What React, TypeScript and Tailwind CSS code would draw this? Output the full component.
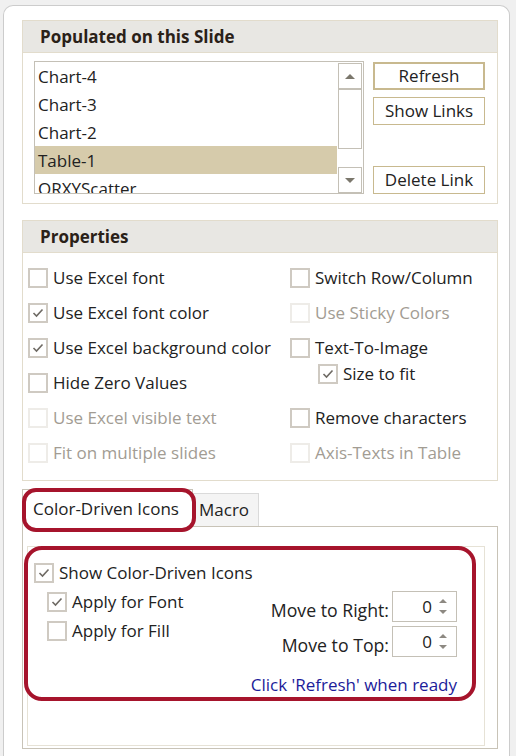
import React from 'react';

const FONT = { fontFamily: "'Open Sans', 'Noto Sans', sans-serif" };

function Box({ checked, disabled }: { checked?: boolean; disabled?: boolean }) {
    return (
        <span
            className={`flex h-5 w-5 shrink-0 items-center justify-center border-2 bg-white ${
                disabled ? 'border-[#eeece8]' : 'border-[#cfcac2]'
            }`}
        >
            {checked && (
                <svg width="12" height="10" viewBox="0 0 12 10">
                    <path d="M1.5 5 L4.5 8 L10.5 1.5" fill="none" stroke="#6e6a64" strokeWidth="1.6" />
                </svg>
            )}
        </span>
    );
}

function Check({
    label,
    checked,
    disabled,
    className = '',
}: {
    label: string;
    checked?: boolean;
    disabled?: boolean;
    className?: string;
}) {
    return (
        <div className={`flex items-center gap-[5px] ${className}`}>
            <Box checked={checked} disabled={disabled} />
            <span className={`whitespace-nowrap ${disabled ? 'text-[#a29c93]' : 'text-[#222]'}`}>{label}</span>
        </div>
    );
}

function Arrow({ up, size = 'lg' }: { up?: boolean; size?: 'lg' | 'sm' }) {
    const w = size === 'lg' ? 10 : 8;
    const h = size === 'lg' ? 5 : 4;
    return (
        <svg width={w} height={h} viewBox={`0 0 ${w} ${h}`}>
            <polygon
                points={up ? `0,${h} ${w},${h} ${w / 2},0` : `0,0 ${w},0 ${w / 2},${h}`}
                fill={size === 'lg' ? '#7b776c' : '#8d8982'}
            />
        </svg>
    );
}

function Spin({ label }: { label: string }) {
    return (
        <div className="flex items-center gap-[3px]">
            <span className="translate-y-[4px] whitespace-nowrap text-[17.7px] text-[#222]">{label}</span>
            <div className="flex h-[31px] w-[65px] items-center border border-[#c4c0b6] bg-white">
                <span className="flex-1 pr-[4px] text-right text-[#222]">0</span>
                <div className="flex w-[20px] flex-col items-center gap-[7px] pr-[6px]">
                    <Arrow up size="sm" />
                    <Arrow size="sm" />
                </div>
            </div>
        </div>
    );
}

const items = ['Chart-4', 'Chart-3', 'Chart-2', 'Table-1', 'QRXYScatter'];

export default function App() {
    return (
        <div className="min-h-screen bg-[#f0f0f0] pl-[3px] pr-[6px] pt-[5px] text-[17px]" style={FONT}>
            <div className="rounded-t-[10px] border border-b-0 border-[#cccccc] bg-white pb-4 pl-[18px] pr-[11px] pt-[14px]">
                {/* Populated on this Slide */}
                <div className="border border-[#e2dccc]">
                    <div className="flex h-[32px] items-center border-b border-[#e2dccc] bg-[#e8e7e3] pl-[17px] text-[17px] font-bold text-[#2a2118]">
                        Populated on this Slide
                    </div>
                    <div className="flex gap-[9px] pb-[9px] pl-[11px] pt-[8px]">
                        <div className="flex h-[133px] w-[330px] border border-[#c4c0b6]">
                            <div className="flex-1 overflow-hidden">
                                {items.map((it) => (
                                    <div
                                        key={it}
                                        className={`flex h-[28px] items-center pl-[3px] pt-px text-[#222] ${
                                            it === 'Table-1' ? 'bg-[#d6cbab]' : ''
                                        }`}
                                    >
                                        {it}
                                    </div>
                                ))}
                            </div>
                            <div className="flex w-[26px] flex-col px-px pt-px">
                                <div className="flex h-[26px] items-center justify-center border border-[#c4c0b6]">
                                    <Arrow up />
                                </div>
                                <div className="h-[60px] border border-[#c4c0b6]" />
                                <div className="flex-1" />
                                <div className="flex h-[26px] items-center justify-center border border-[#c4c0b6]">
                                    <Arrow />
                                </div>
                            </div>
                        </div>
                        <div className="flex w-[112px] flex-col pt-px text-[#222]">
                            <button className="flex h-[28px] items-center justify-center border-2 border-[#c8b98f] bg-white">
                                Refresh
                            </button>
                            <button className="mt-[7px] flex h-[28px] items-center justify-center border border-[#c8b98f] bg-white">
                                Show Links
                            </button>
                            <button className="mt-[41px] flex h-[28px] items-center justify-center border border-[#c8b98f] bg-white">
                                Delete Link
                            </button>
                        </div>
                    </div>
                </div>

                {/* Properties */}
                <div className="mt-[16px] border border-[#e2dccc]">
                    <div className="flex h-[32px] items-center border-b border-[#e2dccc] bg-[#e8e7e3] pl-[17px] text-[17px] font-bold text-[#2a2118]">
                        Properties
                    </div>
                    <div className="grid grid-cols-[262px_1fr] pb-[10px] pl-[5px] pt-[7px]">
                        <div className="flex flex-col">
                            <Check className="h-[35px]" label="Use Excel font" />
                            <Check className="h-[35px]" label="Use Excel font color" checked />
                            <Check className="h-[35px]" label="Use Excel background color" checked />
                            <Check className="h-[35px]" label="Hide Zero Values" />
                            <Check className="h-[35px]" label="Use Excel visible text" disabled />
                            <Check className="h-[35px]" label="Fit on multiple slides" disabled />
                        </div>
                        <div className="flex flex-col">
                            <Check className="h-[35px]" label="Switch Row/Column" />
                            <Check className="h-[35px]" label="Use Sticky Colors" disabled />
                            <Check className="h-[35px]" label="Text-To-Image" />
                            <Check className="-mt-[4px] h-[26px] pl-[28px]" label="Size to fit" checked />
                            <Check className="mt-[13px] h-[35px]" label="Remove characters" />
                            <Check className="h-[35px]" label="Axis-Texts in Table" disabled />
                        </div>
                    </div>
                </div>

                {/* Tabs */}
                <div className="mt-[8px] flex items-end">
                    <div className="relative z-10 -mb-px flex h-[38px] w-[171px] items-center border border-b-0 border-[#c8c3b7] bg-white pl-[10px] pt-px text-[#222]">
                        Color-Driven Icons
                        <span className="pointer-events-none absolute -left-px -top-[2px] h-[44px] w-[174px] rounded-[14px] border-[4px] border-[#a6142c]" />
                    </div>
                    <div className="flex h-[33px] items-center border border-b-0 border-l-0 border-[#dadada] bg-[#f4f4f4] pl-[6px] pr-[9px] text-[#222]">
                        Macro
                    </div>
                </div>
                <div className="border border-[#c8c3b7] pb-[2px] pl-[4px] pr-[12px] pt-[19px]">
                    <div className="h-[200px] border border-[#e6e2d6]">
                        <div className="-ml-[4px] -mt-px h-[155px] w-[452px] rounded-[18px] border-[4px] border-[#a6142c] pl-[6px] pr-[15px] pt-[9px]">
                            <Check className="h-[28px]" label="Show Color-Driven Icons" checked />
                            <div className="flex justify-between">
                                <div className="flex flex-col pl-[13px]">
                                    <Check className="h-[29px]" label="Apply for Font" checked />
                                    <Check className="h-[29px]" label="Apply for Fill" />
                                </div>
                                <div className="flex flex-col items-end gap-[4px] pt-[4px]">
                                    <Spin label="Move to Right:" />
                                    <Spin label="Move to Top:" />
                                    <div className="mt-[11px] whitespace-nowrap text-[#1c1c9a]">Click 'Refresh' when ready</div>
                                </div>
                            </div>
                        </div>
                    </div>
                </div>
            </div>
        </div>
    );
}
